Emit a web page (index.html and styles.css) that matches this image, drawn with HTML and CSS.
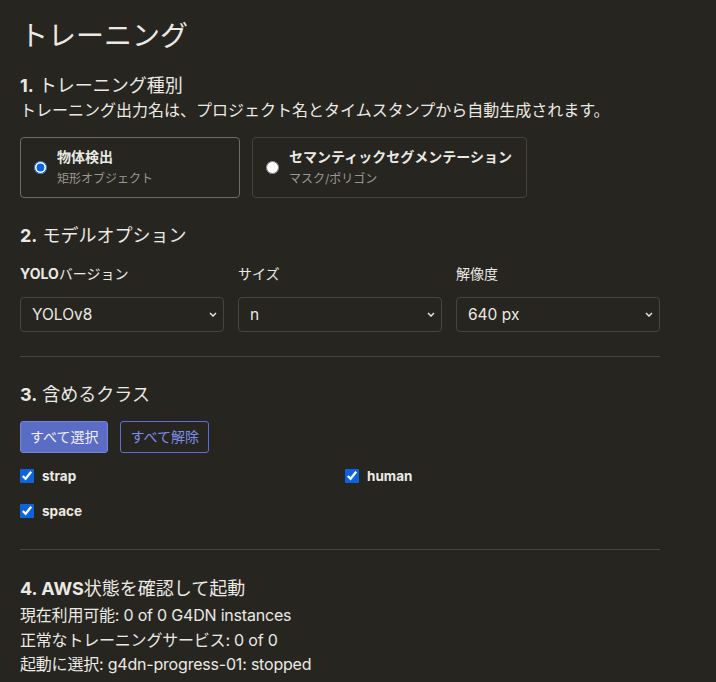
FILE: index.html
```html
<!DOCTYPE html>
<html lang="ja">
<head>
<meta charset="utf-8">
<link rel="stylesheet" href="styles.css">
</head>
<body>
<main class="page">
  <h1 class="title">トレーニング</h1>

  <section>
    <h2 class="heading heading-first"><b>1.</b> トレーニング種別</h2>
    <p class="desc">トレーニング出力名は、プロジェクト名とタイムスタンプから自動生成されます。</p>
    <div class="cards">
      <label class="card card-active">
        <input type="radio" name="kind" class="radio" checked>
        <span class="card-text">
          <span class="card-title">物体検出</span>
          <span class="card-sub">矩形オブジェクト</span>
        </span>
      </label>
      <label class="card">
        <input type="radio" name="kind" class="radio">
        <span class="card-text">
          <span class="card-title">セマンティックセグメンテーション</span>
          <span class="card-sub">マスク/ポリゴン</span>
        </span>
      </label>
    </div>
  </section>

  <section>
    <h2 class="heading heading-2"><b>2.</b> モデルオプション</h2>
    <div class="options">
      <div class="field">
        <div class="field-label"><b>YOLO</b>バージョン</div>
        <div class="select"><span>YOLOv8</span><svg class="chev" width="8" height="5" viewBox="0 0 8 5"><path d="M1 1 L4 4 L7 1" fill="none" stroke="#e6e4df" stroke-width="1.5"/></svg></div>
      </div>
      <div class="field">
        <div class="field-label">サイズ</div>
        <div class="select"><span>n</span><svg class="chev" width="8" height="5" viewBox="0 0 8 5"><path d="M1 1 L4 4 L7 1" fill="none" stroke="#e6e4df" stroke-width="1.5"/></svg></div>
      </div>
      <div class="field">
        <div class="field-label">解像度</div>
        <div class="select"><span>640 px</span><svg class="chev" width="8" height="5" viewBox="0 0 8 5"><path d="M1 1 L4 4 L7 1" fill="none" stroke="#e6e4df" stroke-width="1.5"/></svg></div>
      </div>
    </div>
  </section>

  <hr class="divider divider-1">

  <section>
    <h2 class="heading heading-3"><b>3.</b> 含めるクラス</h2>
    <div class="buttons">
      <button class="btn btn-primary">すべて選択</button>
      <button class="btn btn-outline">すべて解除</button>
    </div>
    <div class="classes">
      <label class="cls"><input type="checkbox" class="check" checked><span>strap</span></label>
      <label class="cls"><input type="checkbox" class="check" checked><span>human</span></label>
      <label class="cls"><input type="checkbox" class="check" checked><span>space</span></label>
    </div>
  </section>

  <hr class="divider divider-2">

  <section>
    <h2 class="heading heading-4"><b>4. AWS</b>状態を確認して起動</h2>
    <div class="status">
      <p>現在利用可能: 0 of 0 G4DN instances</p>
      <p>正常なトレーニングサービス: 0 of 0</p>
      <p>起動に選択: g4dn-progress-01: stopped</p>
    </div>
  </section>
</main>
</body>
</html>
```

FILE: styles.css
```css
html, body {
  margin: 0;
  padding: 0;
  background: #272520;
}
body {
  color: #ebe9e4;
  font-family: "Inter", "Noto Sans CJK JP", sans-serif;
}
.page {
  width: 640px;
  padding: 19px 20px 0;
}
.title {
  margin: 0;
  font-size: 28px;
  line-height: 34px;
  font-weight: 400;
}
.heading {
  margin: 0;
  font-size: 18px;
  line-height: 24px;
  font-weight: 400;
}
.heading b { font-weight: 700; }
.heading-first { margin-top: 21px; }
.heading-2 { margin-top: 26px; }
.heading-3 { margin-top: 26px; }
.heading-4 { margin-top: 27px; }
.desc {
  margin: 0;
  font-size: 16px;
  line-height: 24px;
}
.cards {
  display: flex;
  gap: 12px;
  margin-top: 15px;
}
.card {
  display: flex;
  align-items: center;
  gap: 10px;
  min-width: 191px;
  padding: 9px 14px 9px 13px;
  border: 1px solid #444340;
  border-radius: 4px;
}
.card-active {
  border-color: #6d6c69;
}
.radio {
  margin: 0;
  width: 13px;
  height: 13px;
  accent-color: #0b63e0;
}
.card-text {
  display: flex;
  flex-direction: column;
}
.card-title {
  font-size: 14px;
  line-height: 20px;
  font-weight: 700;
  margin-bottom: 3px;
}
.card-sub {
  font-size: 12px;
  line-height: 18px;
  color: #9a9893;
}
.options {
  display: grid;
  grid-template-columns: repeat(3, 1fr);
  gap: 14px;
  margin-top: 16px;
}
.field-label {
  font-size: 14px;
  line-height: 20px;
}
.field-label b { font-weight: 700; }
.select {
  margin-top: 13px;
  height: 33px;
  display: flex;
  align-items: center;
  justify-content: space-between;
  padding: 0 6px 0 11px;
  border: 1px solid #46453f;
  border-radius: 4px;
  font-size: 15.5px;
}
.chev { display: block; }
.divider {
  border: 0;
  border-top: 1px solid #46453f;
  margin: 0;
}
.divider-1 { margin-top: 24px; }
.divider-2 { margin-top: 28px; }
.buttons {
  display: flex;
  gap: 12px;
  margin-top: 14px;
}
.btn {
  height: 32px;
  padding: 0 9px;
  font-family: inherit;
  font-size: 14px;
  border-radius: 3px;
  line-height: 20px;
}
.btn-primary {
  background: #5a6cc4;
  border: 1px solid #7384dc;
  color: #f0f0f6;
}
.btn-outline {
  background: transparent;
  border: 1px solid #5d6fd0;
  color: #7c8de6;
}
.classes {
  display: grid;
  grid-template-columns: 1fr 1fr;
  column-gap: 10px;
  row-gap: 15px;
  margin-top: 13px;
}
.cls {
  display: flex;
  align-items: center;
  gap: 8px;
  height: 20px;
  font-size: 13.5px;
  font-weight: 700;
}
.check {
  margin: 0;
  width: 14px;
  height: 14px;
  accent-color: #0b63e0;
}
.status {
  margin-top: 2px;
}
.status p {
  margin: 0;
  font-size: 16px;
  line-height: 24.5px;
  letter-spacing: -0.2px;
}
```
